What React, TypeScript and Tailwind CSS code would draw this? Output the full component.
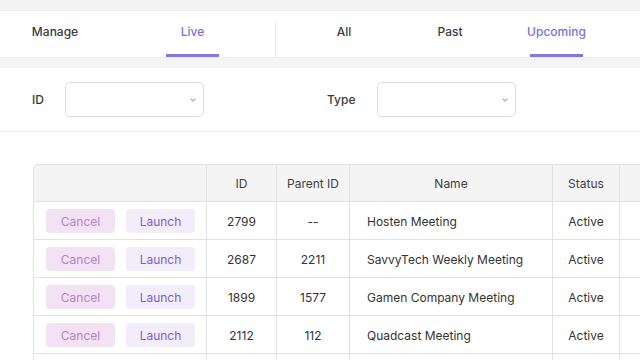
import React from "react";

interface Meeting {
  id: string;
  parentId: string;
  name: string;
  status: string;
}

const meetings: Meeting[] = [
  { id: "2799", parentId: "--", name: "Hosten Meeting", status: "Active" },
  { id: "2687", parentId: "2211", name: "SavvyTech Weekly Meeting", status: "Active" },
  { id: "1899", parentId: "1577", name: "Gamen Company Meeting", status: "Active" },
  { id: "2112", parentId: "112", name: "Quadcast Meeting", status: "Active" },
  { id: "2034", parentId: "1988", name: "Northwind Sync", status: "Active" },
];

function Chevron() {
  return (
    <svg width="8" height="6" viewBox="0 0 8 6" className="text-[#b5b5b5]">
      <path d="M1.5 1.5 L4 4 L6.5 1.5" fill="none" stroke="currentColor" strokeWidth="1.3" />
    </svg>
  );
}

function Select() {
  return (
    <div className="h-[35px] w-[139px] rounded-[5px] border border-[#dcdcdc] bg-white flex items-center justify-end pr-[6px]">
      <Chevron />
    </div>
  );
}

function App() {
  return (
    <div
      className="w-[640px] h-[360px] overflow-hidden bg-white text-[12px] text-[#333]"
      style={{ fontFamily: "Inter, 'Noto Sans', sans-serif" }}
    >
      <div className="h-[11px] bg-[#f4f4f4] border-b border-[#ececec]" />

      {/* tabs */}
      <div className="h-[46px] flex items-stretch font-medium text-[#3b3b3b]">
        <div className="ml-8 w-[46px] flex items-center justify-center whitespace-nowrap pb-[4px]">Manage</div>
        <div className="ml-[88px] w-[53px] flex items-center justify-center whitespace-nowrap pb-[1px] text-[#7b70dc] border-b-[3px] border-[#8179e2]">
          Live
        </div>
        <div className="ml-[56px] w-px h-[35px] self-end bg-[#e8e8e8]" />
        <div className="ml-[48px] w-[40px] flex items-center justify-center whitespace-nowrap pb-[4px]">All</div>
        <div className="ml-[66px] w-[40px] flex items-center justify-center whitespace-nowrap pb-[4px]">Past</div>
        <div className="ml-[60px] w-[53px] flex items-center justify-center whitespace-nowrap pb-[1px] text-[#7b70dc] border-b-[3px] border-[#8179e2]">
          Upcoming
        </div>
      </div>

      <div className="h-[11px] bg-[#f4f4f4] border-t border-[#ececec]" />

      {/* filters */}
      <div className="h-[64px] border-b border-[#ebebeb] flex items-center">
        <span className="ml-8 w-[33px] font-medium text-[#3b3b3b]">ID</span>
        <Select />
        <span className="ml-[123px] w-[50px] font-medium text-[#3b3b3b]">Type</span>
        <Select />
      </div>

      {/* table */}
      <div className="mt-[32px] ml-[33px] overflow-hidden">
        <table className="border-separate border-spacing-0 table-fixed w-[760px]">
          <colgroup>
            <col className="w-[174px]" />
            <col className="w-[70px]" />
            <col className="w-[73px]" />
            <col className="w-[203px]" />
            <col className="w-[67px]" />
            <col className="w-[173px]" />
          </colgroup>
          <thead>
            <tr className="h-[38px] bg-[#f4f4f4] text-[#404040]">
              <th className="border border-[#e2e2e2] rounded-tl-[5px] font-normal" />
              <th className="border-t border-b border-r border-[#e2e2e2] font-normal pt-[1px]">ID</th>
              <th className="border-t border-b border-r border-[#e2e2e2] font-normal pt-[1px]">Parent ID</th>
              <th className="border-t border-b border-r border-[#e2e2e2] font-normal pt-[1px]">Name</th>
              <th className="border-t border-b border-r border-[#e2e2e2] font-normal pt-[1px]">Status</th>
              <th className="border-t border-b border-r border-[#e2e2e2] font-normal" />
            </tr>
          </thead>
          <tbody>
            {meetings.map((m) => (
              <tr key={m.id} className="h-[38px]">
                <td className="border-l border-b border-r border-[#e2e2e2] pl-[12px] pt-[1px]">
                  <div className="flex gap-[11px]">
                    <button className="w-[69px] h-[24px] pt-[2px] rounded-[4px] bg-[#f3e2f4] text-[#b483cb]">Cancel</button>
                    <button className="w-[69px] h-[24px] pt-[2px] rounded-[4px] bg-[#f3edfb] text-[#7a61c9]">Launch</button>
                  </div>
                </td>
                <td className="border-b border-r border-[#e2e2e2] text-center pt-[3px]">{m.id}</td>
                <td className="border-b border-r border-[#e2e2e2] text-center pt-[3px]">{m.parentId}</td>
                <td className="border-b border-r border-[#e2e2e2] pl-[17px] pt-[3px] whitespace-nowrap">{m.name}</td>
                <td className="border-b border-r border-[#e2e2e2] text-center pt-[3px]">{m.status}</td>
                <td className="border-b border-r border-[#e2e2e2]" />
              </tr>
            ))}
          </tbody>
        </table>
      </div>
    </div>
  );
}

export default App;
